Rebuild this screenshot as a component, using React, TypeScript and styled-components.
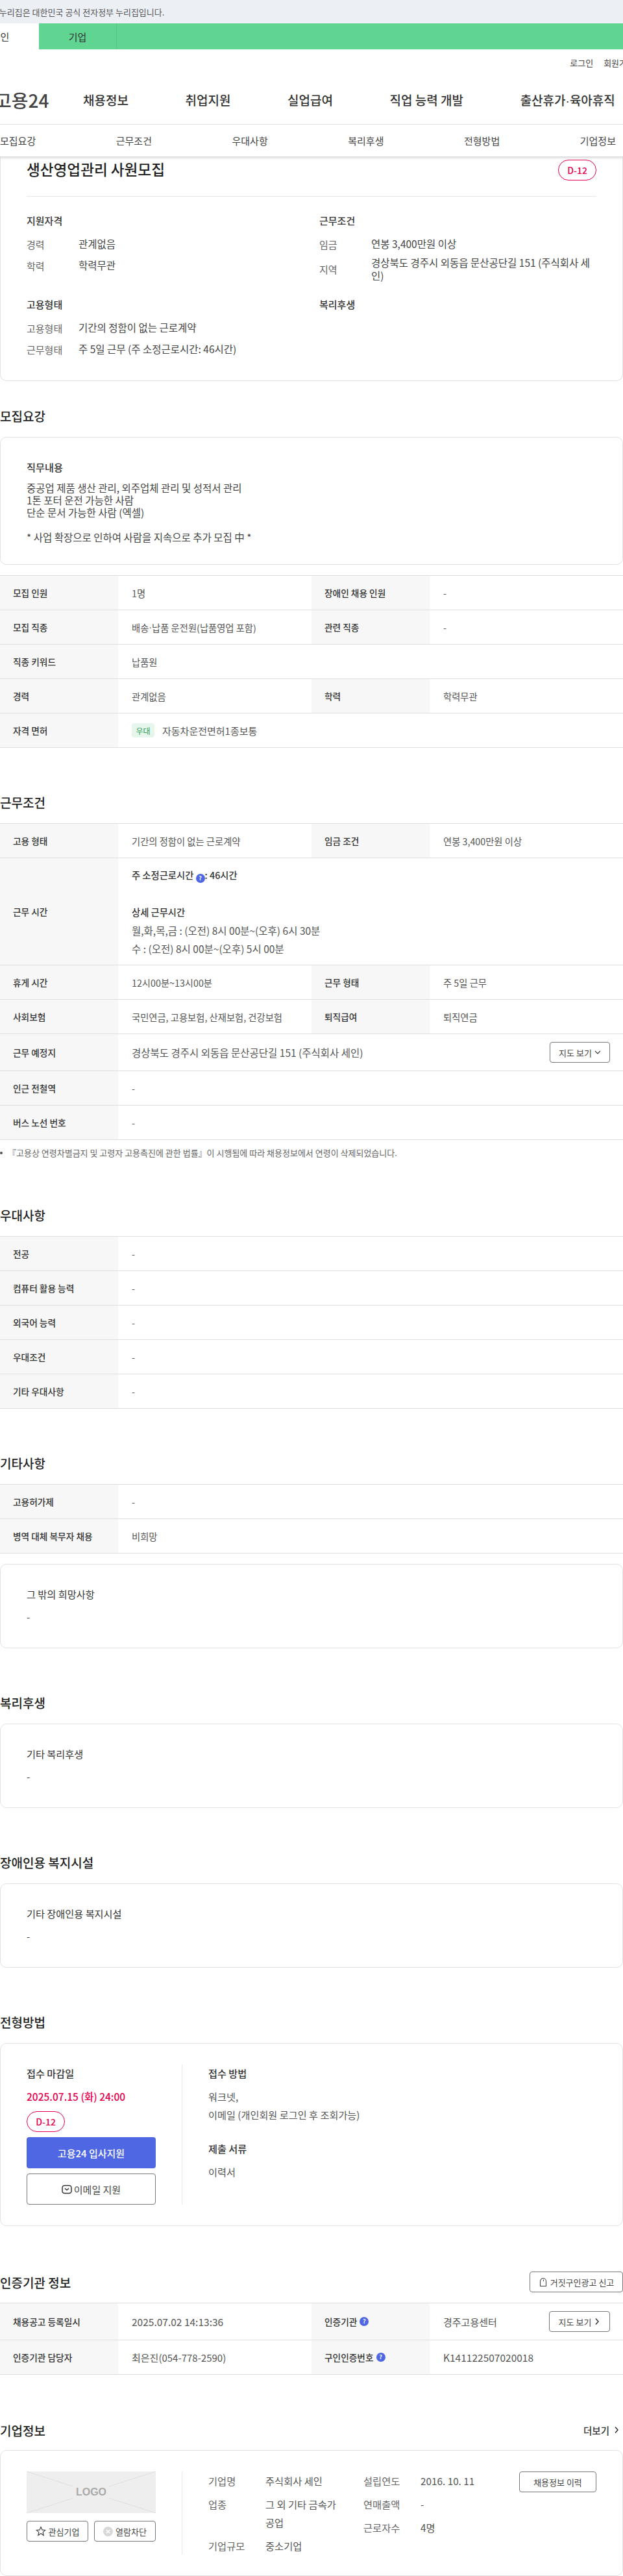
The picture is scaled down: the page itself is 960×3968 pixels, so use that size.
import styled, { createGlobalStyle } from "styled-components";

const GlobalStyle = createGlobalStyle`
  * { box-sizing: border-box; }
  html, body { margin: 0; padding: 0; background: #fff; }
  body {
    font-family: "Noto Sans CJK KR", "Noto Sans", sans-serif;
    color: #333;
    font-size: 15px;
  }
  h1, h2, h3, p, dl, dd, dt, ul { margin: 0; padding: 0; }
`;

const Page = styled.div`
  width: 960px;
  height: 3968px;
  overflow: hidden;
`;
const Banner = styled.div`
  height: 36px;
  background: #ecf0f5;
  display: flex;
  align-items: center;
  font-size: 13px;
  color: #555;
  white-space: nowrap;
  span { margin-left: -16px; }
`;
const GreenBar = styled.div`
  height: 40px;
  background: #60d491;
  display: flex;
  margin-left: -59px;
`;
const UserTab = styled.div<{ $active?: boolean }>`
  width: ${(p) => (p.$active ? 119 : 120)}px;
  display: flex;
  align-items: center;
  justify-content: center;
  font-size: 15px;
  color: #333;
  background: ${(p) => (p.$active ? "#fff" : "transparent")};
  border-right: ${(p) => (p.$active ? "none" : "1px solid #58c586")};
`;
const UtilRow = styled.div`
  height: 40px;
  display: flex;
  justify-content: flex-end;
  align-items: center;
  gap: 16px;
  margin-right: -18px;
  font-size: 13px;
  color: #444;
`;
const MainNav = styled.div`
  height: 76px;
  display: flex;
  align-items: center;
  border-bottom: 1px solid #e6e6e6;
  gap: 87.6px;
`;
const Logo = styled.div`
  font-size: 28px;
  font-weight: 500;
  color: #444;
  margin-left: -8px;
  margin-right: -35px;
  white-space: nowrap;
`;
const NavItem = styled.a`
  font-size: 19px;
  font-weight: 500;
  color: #333;
  white-space: nowrap;
`;
const Dot = styled.span`
  font-family: "Liberation Sans", sans-serif;
`;
const SubNav = styled.div`
  position: relative;
  z-index: 2;
  height: 49px;
  background: #fff;
  display: flex;
  justify-content: space-between;
  align-items: center;
  padding-right: 11px;
  font-size: 15px;
  color: #444;
  box-shadow: 0 2px 4px rgba(0, 0, 0, 0.18);
`;

const Card = styled.div`
  border: 1px solid #e2e2e2;
  border-radius: 10px;
  padding: 32px 40px 34px;
`;
const SummaryCard = styled(Card)`
  border-top: none;
  border-radius: 0 0 10px 10px;
  padding: 5px 40px 32px;
  height: 346px;
`;
const SummaryHead = styled.div`
  display: flex;
  justify-content: space-between;
  padding-bottom: 24px;
  border-bottom: 1px solid #e8e8e8;
  height: 57px;
`;
const JobTitle = styled.h1`
  font-size: 22.6px;
  line-height: 30px;
  font-weight: 500;
  color: #222;
`;
const DdayBadge = styled.div`
  width: 59px;
  height: 32px;
  border: 1px solid #e6004d;
  border-radius: 16px;
  color: #e6004d;
  font-size: 14px;
  font-weight: 500;
  display: flex;
  align-items: center;
  justify-content: center;
`;
const SummaryGrid = styled.div`
  display: grid;
  grid-template-columns: 451px 1fr;
  row-gap: 17px;
  margin-top: 24px;
`;
const GroupTitle = styled.h3`
  font-size: 15px;
  line-height: 26px;
  font-weight: 500;
  color: #333;
  margin-bottom: 9px;
`;
const SummaryRow = styled.div`
  display: flex;
  align-items: center;
  min-height: 28px;
  margin-bottom: 5px;
`;
const SummaryLabel = styled.span`
  width: 80px;
  flex: none;
  color: #666;
`;
const SummaryValue = styled.span`
  color: #444;
  font-size: 15.5px;
  line-height: 19.5px;
`;

const SectionHead = styled.h2<{ $top: number }>`
  font-size: 19px;
  line-height: 28px;
  font-weight: 500;
  color: #222;
  margin: ${(p) => p.$top}px 0 18px;
`;
const HeadRow = styled.div<{ $top: number; $height: number; $bottom: number }>`
  display: flex;
  justify-content: space-between;
  align-items: center;
  height: ${(p) => p.$height}px;
  margin: ${(p) => p.$top}px 0 ${(p) => p.$bottom}px;
  h2 {
    font-size: 19px;
    font-weight: 500;
    color: #222;
  }
`;
const TextCard = styled(Card)<{ $top?: number }>`
  height: 130px;
  margin-top: ${(p) => p.$top ?? 0}px;
`;
const JobCard = styled(Card)`
  height: 197px;
`;
const CardTitle = styled.div<{ $bold?: boolean }>`
  line-height: 26px;
  font-size: 15.2px;
  font-weight: ${(p) => (p.$bold ? 500 : 400)};
  color: #333;
`;
const CardDash = styled.div`
  line-height: 26px;
  margin-top: 10px;
  color: #444;
`;
const JobText = styled.div`
  font-size: 15.5px;
  line-height: 19px;
  margin-top: 10px;
  color: #444;
  white-space: pre-line;
`;

const Table = styled.div<{ $top?: number }>`
  border-top: 1px solid #dfdfdf;
  margin-top: ${(p) => p.$top ?? 0}px;
`;
const Row = styled.div<{ $height?: number }>`
  display: grid;
  grid-template-columns: 182px 298px 182px 298px;
  min-height: ${(p) => p.$height ?? 53}px;
  border-bottom: 1px solid #dfdfdf;
`;
const Th = styled.div`
  background: #f7f7f7;
  display: flex;
  align-items: center;
  gap: 4px;
  padding-left: 20px;
  font-size: 13.7px;
  font-weight: 500;
  color: #333;
`;
const Td = styled.div<{ $wide?: boolean; $size?: number }>`
  display: flex;
  align-items: center;
  padding: 0 20px 0 21px;
  font-size: ${(p) => p.$size ?? 14.3}px;
  color: #555;
  grid-column: ${(p) => (p.$wide ? "span 3" : "auto")};
`;
const SplitTd = styled(Td)`
  justify-content: space-between;
`;
const HoursBox = styled.div`
  display: flex;
  flex-direction: column;
  justify-content: center;
`;
const HoursLine = styled.div<{ $bold?: boolean; $gap?: number }>`
  line-height: 28px;
  font-size: ${(p) => (p.$bold ? 14.3 : 15.5)}px;
  font-weight: ${(p) => (p.$bold ? 500 : 400)};
  color: ${(p) => (p.$bold ? "#333" : "#555")};
  margin-top: ${(p) => p.$gap ?? 0}px;
`;
const Prefer = styled.span`
  width: 35px;
  height: 22px;
  background: #e6f6ec;
  border-radius: 4px;
  color: #2f9e5b;
  font-size: 12px;
  display: flex;
  align-items: center;
  justify-content: center;
  margin-right: 12px;
`;
const Help = styled.span`
  width: 14px;
  height: 14px;
  border-radius: 50%;
  background: #4f67e3;
  color: #fff;
  font-size: 9px;
  font-weight: 700;
  line-height: 14px;
  display: inline-flex;
  align-items: center;
  justify-content: center;
  vertical-align: -2px;
`;
const OutlineButton = styled.button<{ $width: number; $height?: number }>`
  width: ${(p) => p.$width}px;
  height: ${(p) => p.$height ?? 32}px;
  flex: none;
  background: #fff;
  border: 1px solid #777;
  border-radius: 4px;
  font-family: inherit;
  font-size: 13px;
  color: #444;
  display: inline-flex;
  align-items: center;
  justify-content: center;
  gap: 4px;
  padding: 0;
`;
const Note = styled.p`
  margin-top: 10px;
  line-height: 20px;
  font-size: 13px;
  color: #666;
  display: flex;
  align-items: center;
  &::before {
    content: "";
    width: 4px;
    height: 4px;
    border-radius: 50%;
    background: #555;
    margin-right: 8px;
  }
`;

const ApplyCard = styled(Card)`
  display: flex;
  height: 282px;
  padding: 32px 40px;
`;
const ApplyLeft = styled.div`
  width: 199px;
  padding-right: 40px;
  flex: none;
  border-right: 1px solid #e8e8e8;
  box-sizing: content-box;
  display: flex;
  flex-direction: column;
  align-items: flex-start;
`;
const Deadline = styled.div`
  color: #e6004d;
  font-size: 15.5px;
  font-weight: 500;
  line-height: 26px;
  margin: 10px 0;
`;
const ApplyButton = styled.button`
  width: 199px;
  height: 48px;
  margin-top: 8px;
  background: #4f67e3;
  border: none;
  border-radius: 4px;
  color: #fff;
  font-family: inherit;
  font-size: 15px;
  font-weight: 500;
`;
const EmailButton = styled(OutlineButton)`
  margin-top: 8px;
  font-size: 15px;
  gap: 3px;
`;
const ApplyRight = styled.div`
  padding-left: 40px;
`;
const ApplyValue = styled.div<{ $gap?: number }>`
  font-size: 15.2px;
  line-height: 28px;
  color: #555;
  margin-top: ${(p) => p.$gap ?? 0}px;
`;
const SubHead = styled(CardTitle)<{ $gap?: number }>`
  margin-top: ${(p) => p.$gap ?? 0}px;
  font-weight: 500;
`;

const MoreLink = styled.a`
  font-size: 14.5px;
  font-weight: 500;
  color: #333;
  display: flex;
  align-items: center;
  gap: 6px;
  margin-right: 5px;
`;
const CompanyCard = styled(Card)`
  display: flex;
  height: 194px;
  padding: 32px 0 32px 40px;
`;
const CompanyLeft = styled(ApplyLeft)`
  gap: 12px;
`;
const LogoBox = styled.div`
  width: 199px;
  height: 64px;
  position: relative;
  background: #eee;
  svg { position: absolute; inset: 0; }
`;
const LogoText = styled.span`
  position: absolute;
  inset: 0;
  display: flex;
  align-items: center;
  justify-content: center;
  font-family: "Liberation Sans", sans-serif;
  color: #aaa;
  font-size: 16px;
  font-weight: 700;
`;
const CompanyActions = styled.div`
  display: flex;
  justify-content: space-between;
  width: 199px;
`;
const CompanyInfo = styled.div`
  display: flex;
  padding-left: 40px;
`;
const InfoColumn = styled.dl<{ $width: number }>`
  width: ${(p) => p.$width}px;
  display: flex;
  flex-direction: column;
  gap: 8px;
  flex: none;
`;
const InfoRow = styled.div`
  display: grid;
  grid-template-columns: 88px 112px;
  line-height: 28px;
  font-size: 15.3px;
  dt { color: #666; }
  dd { color: #555; }
`;

const Chevron = ({ dir }: { dir: "down" | "right" }) => (
  <svg width="10" height="14" viewBox="0 0 10 14" fill="none" stroke="#333" strokeWidth={dir === "down" ? 1.1 : 1.5}>
    {dir === "down" ? <path d="M1 5l4 4 4-4" /> : <path d="M3 2.500l4 4.500-4 4.500" />}
  </svg>
);

const MailIcon = () => (
  <svg width="16" height="15" viewBox="0 0 16 15" fill="none" stroke="#333" strokeWidth="1.500">
    <rect x="1" y="1.500" width="14" height="12" rx="3.500" />
    <path d="M5 6l3 2.500L11 6" />
  </svg>
);

const SirenIcon = () => (
  <svg width="14" height="16" viewBox="0 0 14 16" fill="none" stroke="#444" strokeWidth="1.100">
    <path d="M2.500 14.500V7a4.500 4.500 0 0 1 9 0v7.500z" />
    <path d="M7.500 4.500v2.500" />
  </svg>
);

const StarIcon = () => (
  <svg width="16" height="16" viewBox="0 0 16 16" fill="none" stroke="#444" strokeWidth="1.200">
    <path d="M8 1.500l2 4.400 4.700.5-3.500 3.200 1 4.700L8 11.400l-4.200 2.900 1-4.700L1.300 6.400l4.700-.5z" />
  </svg>
);

const BlockIcon = () => (
  <svg width="15" height="15" viewBox="0 0 15 15" fill="none">
    <circle cx="7.500" cy="7.500" r="7.500" fill="#d8d8d8" />
    <path d="M5 5l5 5M10 5l-5 5" stroke="#fff" strokeWidth="1.500" />
  </svg>
);

const LogoLines = () => (
  <svg width="199" height="64" viewBox="0 0 199 64" stroke="#dedede" strokeWidth="1">
    <path d="M0 0l72 23M199 0l-72 23M0 64l72-23M199 64l-72-23" />
  </svg>
);

export default function App() {
  return (
    <Page>
      <GlobalStyle />
      <Banner><span>이 누리집은 대한민국 공식 전자정부 누리집입니다.</span></Banner>
      <GreenBar>
        <UserTab $active>개인</UserTab>
        <UserTab>기업</UserTab>
      </GreenBar>
      <UtilRow>
        <span>로그인</span>
        <span>회원가입</span>
      </UtilRow>
      <MainNav>
        <Logo>고용24</Logo>
        <NavItem>채용정보</NavItem>
        <NavItem>취업지원</NavItem>
        <NavItem>실업급여</NavItem>
        <NavItem>직업 능력 개발</NavItem>
        <NavItem>출산휴가<Dot>·</Dot>육아휴직</NavItem>
      </MainNav>
      <SubNav>
        <span>모집요강</span>
        <span>근무조건</span>
        <span>우대사항</span>
        <span>복리후생</span>
        <span>전형방법</span>
        <span>기업정보</span>
      </SubNav>

      <SummaryCard>
        <SummaryHead>
          <JobTitle>생산영업관리 사원모집</JobTitle>
          <DdayBadge>D-12</DdayBadge>
        </SummaryHead>
        <SummaryGrid>
          <div>
            <GroupTitle>지원자격</GroupTitle>
            <SummaryRow><SummaryLabel>경력</SummaryLabel><SummaryValue>관계없음</SummaryValue></SummaryRow>
            <SummaryRow><SummaryLabel>학력</SummaryLabel><SummaryValue>학력무관</SummaryValue></SummaryRow>
          </div>
          <div>
            <GroupTitle>근무조건</GroupTitle>
            <SummaryRow><SummaryLabel>임금</SummaryLabel><SummaryValue>연봉 3,400만원 이상</SummaryValue></SummaryRow>
            <SummaryRow><SummaryLabel>지역</SummaryLabel><SummaryValue>경상북도 경주시 외동읍 문산공단길 151 (주식회사 세인)</SummaryValue></SummaryRow>
          </div>
          <div>
            <GroupTitle>고용형태</GroupTitle>
            <SummaryRow><SummaryLabel>고용형태</SummaryLabel><SummaryValue>기간의 정함이 없는 근로계약</SummaryValue></SummaryRow>
            <SummaryRow><SummaryLabel>근무형태</SummaryLabel><SummaryValue>주 5일 근무 (주 소정근로시간: 46시간)</SummaryValue></SummaryRow>
          </div>
          <div>
            <GroupTitle>복리후생</GroupTitle>
          </div>
        </SummaryGrid>
      </SummaryCard>

      <SectionHead $top={40}>모집요강</SectionHead>
      <JobCard>
        <CardTitle $bold>직무내용</CardTitle>
        <JobText>{"중공업 제품 생산 관리, 외주업체 관리 및 성적서 관리\n1톤 포터 운전 가능한 사람\n단순 문서 가능한 사람 (엑셀)\n\n* 사업 확장으로 인하여 사람을 지속으로 추가 모집 中 *"}</JobText>
      </JobCard>
      <Table $top={16}>
        <Row><Th>모집 인원</Th><Td>1명</Td><Th>장애인 채용 인원</Th><Td>-</Td></Row>
        <Row><Th>모집 직종</Th><Td>배송<Dot>·</Dot>납품 운전원(납품영업 포함)</Td><Th>관련 직종</Th><Td>-</Td></Row>
        <Row><Th>직종 키워드</Th><Td $wide>납품원</Td></Row>
        <Row><Th>경력</Th><Td>관계없음</Td><Th>학력</Th><Td>학력무관</Td></Row>
        <Row><Th>자격 면허</Th><Td $wide $size={15}><Prefer>우대</Prefer>자동차운전면허1종보통</Td></Row>
      </Table>

      <SectionHead $top={70}>근무조건</SectionHead>
      <Table>
        <Row><Th>고용 형태</Th><Td>기간의 정함이 없는 근로계약</Td><Th>임금 조건</Th><Td>연봉 3,400만원 이상</Td></Row>
        <Row $height={165}>
          <Th>근무 시간</Th>
          <Td $wide>
            <HoursBox>
              <HoursLine $bold>주 소정근로시간 <Help>?</Help>: 46시간</HoursLine>
              <HoursLine $bold $gap={29}>상세 근무시간</HoursLine>
              <HoursLine>월,화,목,금 : (오전) 8시 00분~(오후) 6시 30분</HoursLine>
              <HoursLine>수 : (오전) 8시 00분~(오후) 5시 00분</HoursLine>
            </HoursBox>
          </Td>
        </Row>
        <Row><Th>휴게 시간</Th><Td>12시00분~13시00분</Td><Th>근무 형태</Th><Td>주 5일 근무</Td></Row>
        <Row><Th>사회보험</Th><Td>국민연금, 고용보험, 산재보험, 건강보험</Td><Th>퇴직급여</Th><Td>퇴직연금</Td></Row>
        <Row $height={57}>
          <Th>근무 예정지</Th>
          <SplitTd $wide $size={15.5}>
            경상북도 경주시 외동읍 문산공단길 151 (주식회사 세인)
            <OutlineButton $width={93}>지도 보기 <Chevron dir="down" /></OutlineButton>
          </SplitTd>
        </Row>
        <Row><Th>인근 전철역</Th><Td $wide>-</Td></Row>
        <Row><Th>버스 노선 번호</Th><Td $wide>-</Td></Row>
      </Table>
      <Note>『고용상 연령차별금지 및 고령자 고용촉진에 관한 법률』이 시행됨에 따라 채용정보에서 연령이 삭제되었습니다.</Note>

      <SectionHead $top={72}>우대사항</SectionHead>
      <Table>
        <Row><Th>전공</Th><Td $wide>-</Td></Row>
        <Row><Th>컴퓨터 활용 능력</Th><Td $wide>-</Td></Row>
        <Row><Th>외국어 능력</Th><Td $wide>-</Td></Row>
        <Row><Th>우대조건</Th><Td $wide>-</Td></Row>
        <Row><Th>기타 우대사항</Th><Td $wide>-</Td></Row>
      </Table>

      <SectionHead $top={70}>기타사항</SectionHead>
      <Table>
        <Row><Th>고용허가제</Th><Td $wide>-</Td></Row>
        <Row><Th>병역 대체 복무자 채용</Th><Td $wide>비희망</Td></Row>
      </Table>
      <TextCard $top={16}>
        <CardTitle>그 밖의 희망사항</CardTitle>
        <CardDash>-</CardDash>
      </TextCard>

      <SectionHead $top={70}>복리후생</SectionHead>
      <TextCard>
        <CardTitle>기타 복리후생</CardTitle>
        <CardDash>-</CardDash>
      </TextCard>

      <SectionHead $top={70}>장애인용 복지시설</SectionHead>
      <TextCard>
        <CardTitle>기타 장애인용 복지시설</CardTitle>
        <CardDash>-</CardDash>
      </TextCard>

      <SectionHead $top={70}>전형방법</SectionHead>
      <ApplyCard>
        <ApplyLeft>
          <CardTitle $bold>접수 마감일</CardTitle>
          <Deadline>2025.07.15 (화) 24:00</Deadline>
          <DdayBadge>D-12</DdayBadge>
          <ApplyButton>고용24 입사지원</ApplyButton>
          <EmailButton $width={199} $height={48}><MailIcon />이메일 지원</EmailButton>
        </ApplyLeft>
        <ApplyRight>
          <CardTitle $bold>접수 방법</CardTitle>
          <ApplyValue $gap={9}>워크넷,</ApplyValue>
          <ApplyValue>이메일 (개인회원 로그인 후 조회가능)</ApplyValue>
          <SubHead $gap={25}>제출 서류</SubHead>
          <ApplyValue $gap={9}>이력서</ApplyValue>
        </ApplyRight>
      </ApplyCard>

      <HeadRow $top={70} $height={32} $bottom={16}>
        <h2>인증기관 정보</h2>
        <OutlineButton $width={144}><SirenIcon />거짓구인광고 신고</OutlineButton>
      </HeadRow>
      <Table>
        <Row $height={57}>
          <Th>채용공고 등록일시</Th><Td $size={15.5}>2025.07.02 14:13:36</Td>
          <Th>인증기관 <Help>?</Help></Th>
          <SplitTd $size={15}>경주고용센터<OutlineButton $width={94}>지도 보기 <Chevron dir="right" /></OutlineButton></SplitTd>
        </Row>
        <Row>
          <Th>인증기관 담당자</Th><Td $size={15}>최은진(054-778-2590)</Td>
          <Th>구인인증번호 <Help>?</Help></Th><Td $size={15.5}>K141122507020018</Td>
        </Row>
      </Table>

      <HeadRow $top={71} $height={28} $bottom={17}>
        <h2>기업정보</h2>
        <MoreLink>더보기 <Chevron dir="right" /></MoreLink>
      </HeadRow>
      <CompanyCard>
        <CompanyLeft>
          <LogoBox>
            <LogoLines />
            <LogoText>LOGO</LogoText>
          </LogoBox>
          <CompanyActions>
            <OutlineButton $width={95}><StarIcon />관심기업</OutlineButton>
            <OutlineButton $width={95}><BlockIcon />열람차단</OutlineButton>
          </CompanyActions>
        </CompanyLeft>
        <CompanyInfo>
          <InfoColumn $width={239}>
            <InfoRow><dt>기업명</dt><dd>주식회사 세인</dd></InfoRow>
            <InfoRow><dt>업종</dt><dd>그 외 기타 금속가공업</dd></InfoRow>
            <InfoRow><dt>기업규모</dt><dd>중소기업</dd></InfoRow>
          </InfoColumn>
          <InfoColumn $width={240}>
            <InfoRow><dt>설립연도</dt><dd>2016. 10. 11</dd></InfoRow>
            <InfoRow><dt>연매출액</dt><dd>-</dd></InfoRow>
            <InfoRow><dt>근로자수</dt><dd>4명</dd></InfoRow>
          </InfoColumn>
          <OutlineButton $width={119}>채용정보 이력</OutlineButton>
        </CompanyInfo>
      </CompanyCard>
    </Page>
  );
}
